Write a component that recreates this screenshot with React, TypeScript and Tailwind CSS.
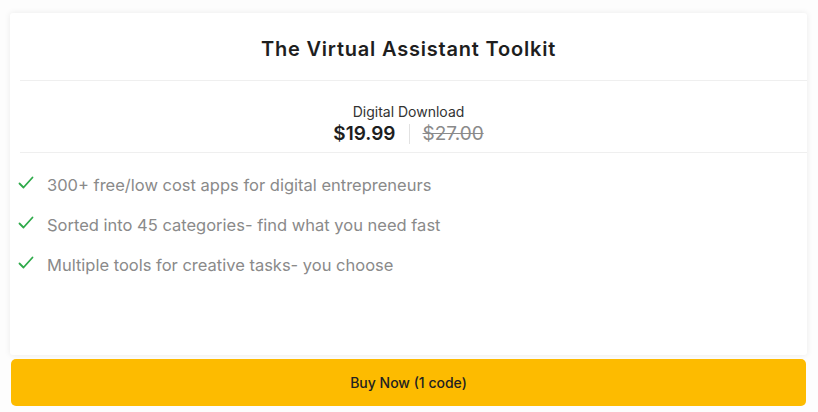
import React from 'react';

const features = [
  '300+ free/low cost apps for digital entrepreneurs',
  'Sorted into 45 categories- find what you need fast',
  'Multiple tools for creative tasks- you choose',
];

const Check = () => (
  <svg width="16" height="14" viewBox="0 0 16 14" fill="none" className="shrink-0">
    <path d="M1.5 7.5 L5.5 11.5 L14.5 1.5" stroke="#2eaa4a" strokeWidth="1.8" strokeLinecap="round" strokeLinejoin="round" />
  </svg>
);

export default function App() {
  return (
    <div
      className="w-[818px] h-[412px] bg-[#fdfdfd] overflow-hidden pt-[13px]"
      style={{ fontFamily: 'Inter, "Open Sans", sans-serif' }}
    >
      <div className="ml-[10px] w-[797px] h-[342px] bg-white rounded-[3px] shadow-[0_0_6px_rgba(0,0,0,0.08)] flex flex-col">
        <div className="h-[68px] flex items-center justify-center ml-[10px] border-b border-[#efefef]">
          <h1 className="text-[20px] font-semibold text-[#1e1e1e] tracking-[0.8px] -ml-[10px] mt-[4px]">
            The Virtual Assistant Toolkit
          </h1>
        </div>

        <div className="h-[72px] ml-[10px] border-b border-[#efefef] flex flex-col items-center pt-[22px]">
          <p className="text-[14px] text-[#333] leading-[18px] -ml-[10px]">Digital Download</p>
          <div className="flex items-center mt-[1px] -ml-[10px]">
            <span className="text-[19px] font-semibold text-[#1e1e1e] leading-[24px]">$19.99</span>
            <span className="w-px h-[20px] bg-[#e2e2e2] mx-[13px]" />
            <span className="text-[19px] text-[#8a8a8a] line-through leading-[24px]">$27.00</span>
          </div>
        </div>

        <ul className="flex flex-col gap-[20px] pt-[22px] pl-[8px]">
          {features.map((f) => (
            <li key={f} className="flex items-center h-[20px]">
              <span className="-mt-[4px]">
                <Check />
              </span>
              <span className="ml-[13px] text-[16.5px] text-[#8a8a8a]">{f}</span>
            </li>
          ))}
        </ul>
      </div>

      <button className="mt-[4px] ml-[11px] w-[795px] h-[47px] rounded-[5px] bg-[#fdbb00] text-[14px] font-medium text-[#222]">
        Buy Now (1 code)
      </button>
    </div>
  );
}
